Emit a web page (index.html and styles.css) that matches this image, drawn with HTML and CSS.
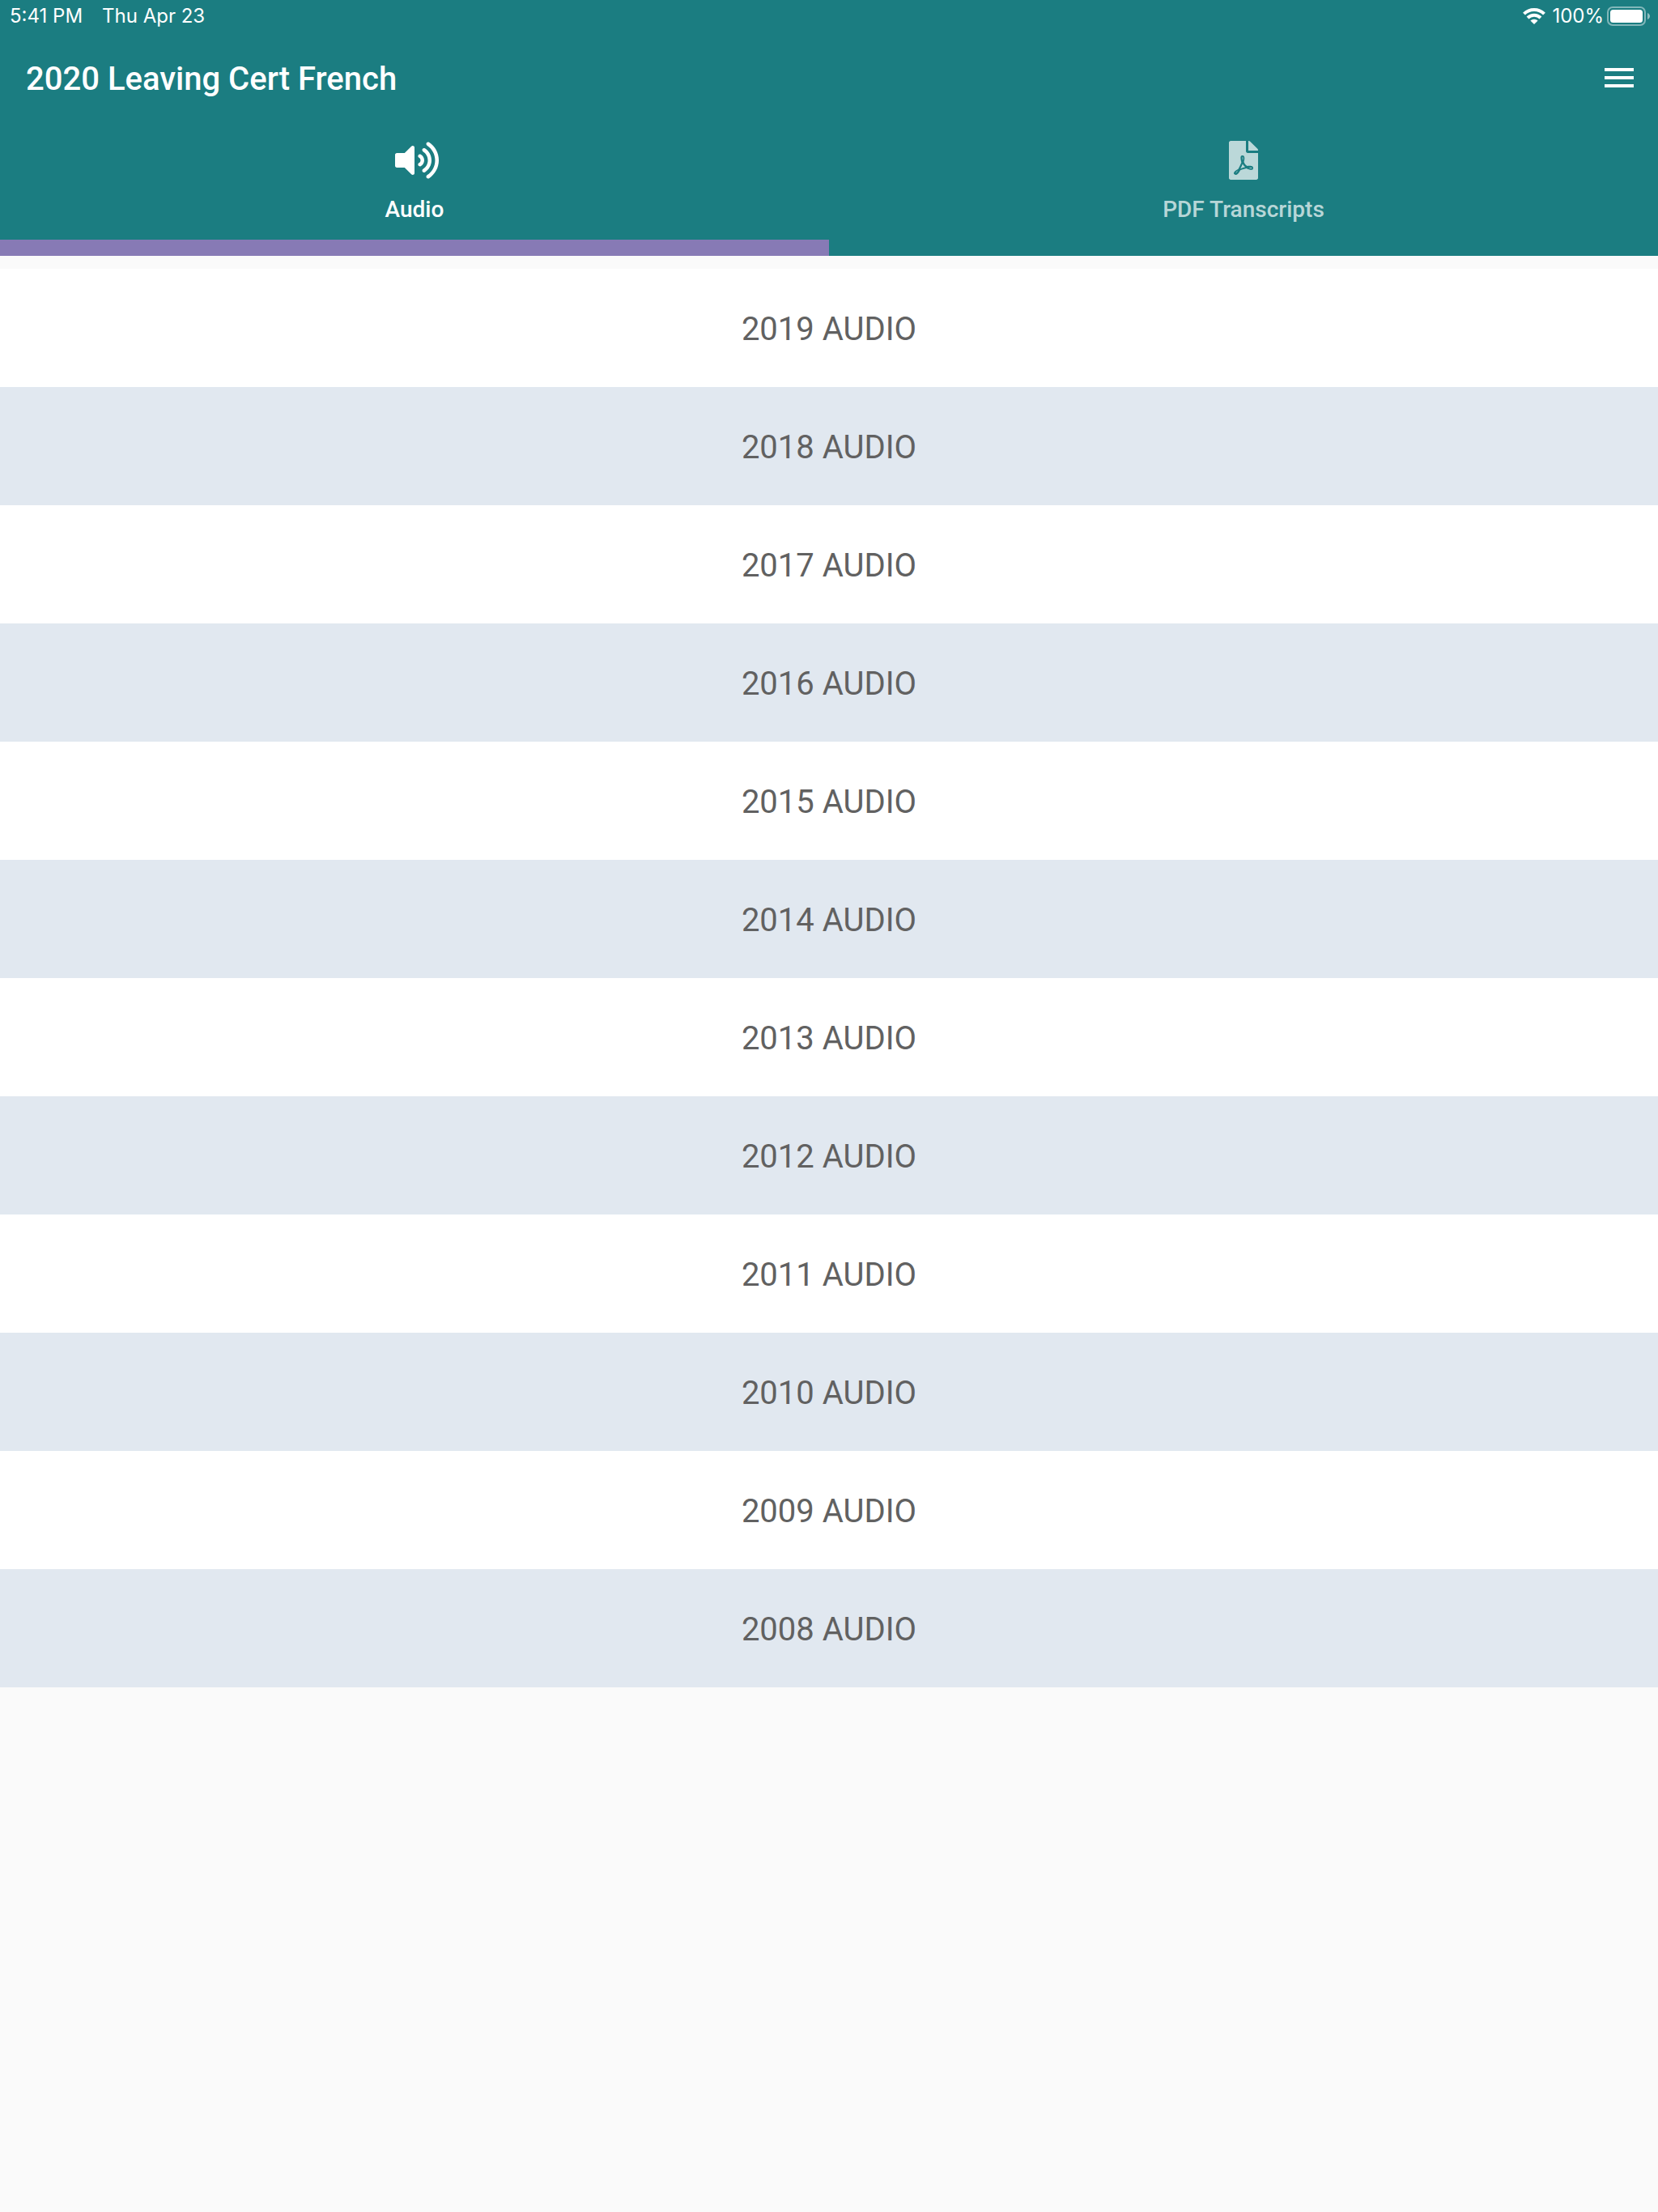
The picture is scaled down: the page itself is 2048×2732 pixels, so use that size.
FILE: index.html
```html
<!DOCTYPE html>
<html lang="en">
<head>
  <meta charset="UTF-8" />
  <meta name="viewport" content="width=device-width, initial-scale=1" />
  <title>2020 Leaving Cert French</title>
  <link rel="stylesheet" href="styles.css">
</head>
<body>
  <header class="header">
    <div class="status-bar">
      <div class="status-left">
        <span>5:41 PM</span>
        <span>Thu Apr 23</span>
      </div>
      <div class="status-right">
        <svg class="wifi" viewBox="0 0 28 20" aria-hidden="true">
          <g fill="none" stroke="#fff" stroke-width="4">
            <path d="M1.5 7.2a17.7 17.7 0 0 1 25 0" />
            <path d="M6 12a11.5 11.5 0 0 1 16 0" />
          </g>
          <path d="M9.4 15.6a6.6 6.6 0 0 1 9.2 0L14 20z" fill="#fff" />
        </svg>
        <span class="percent">100%</span>
        <svg class="battery" viewBox="0 0 54 24" aria-hidden="true">
          <rect x="1" y="1" width="46" height="22" rx="6" fill="none" stroke="#fff" stroke-opacity=".45" stroke-width="2" />
          <rect x="4" y="4" width="40" height="16" rx="3.5" fill="#fff" />
          <path d="M50 8c4 1.5 4 6.5 0 8z" fill="#fff" fill-opacity=".5" />
        </svg>
      </div>
    </div>

    <div class="toolbar">
      <h1>2020 Leaving Cert French</h1>
      <button class="menu-btn" type="button" aria-label="Menu">
        <svg viewBox="0 0 24 24" fill="#fff"><path d="M3 18h18v-2H3v2zm0-5h18v-2H3v2zm0-7v2h18V6H3z" /></svg>
      </button>
    </div>

    <div class="tabs" role="tablist">
      <button class="tab active" type="button" role="tab" aria-selected="true">
        <span class="tab-icon">
          <svg class="icon-audio" viewBox="0 0 576 512" fill="currentColor"><path d="M215.03 71.05L126.06 160H24c-13.26 0-24 10.74-24 24v144c0 13.25 10.74 24 24 24h102.06l88.97 88.95c15.03 15.03 40.97 4.47 40.97-16.97V88.02c0-21.46-25.96-31.98-40.97-16.97zm233.32-51.08c-11.17-7.33-26.18-4.24-33.51 6.95-7.34 11.17-4.22 26.18 6.95 33.51 66.27 43.49 105.82 116.6 105.82 195.58 0 78.98-39.55 152.09-105.82 195.58-11.17 7.32-14.29 22.34-6.95 33.5 7.04 10.71 21.93 14.56 33.51 6.95C528.27 439.58 576 351.33 576 256S528.27 72.43 448.35 19.97zM480 256c0-63.53-32.06-121.94-85.77-156.24-11.19-7.14-26.03-3.82-33.12 7.46s-3.78 26.21 7.41 33.36C408.27 165.97 432 209.11 432 256s-23.73 90.02-63.48 115.42c-11.19 7.14-14.5 22.07-7.41 33.36 6.51 10.36 21.12 15.14 33.12 7.46C447.94 377.94 480 319.54 480 256zm-141.77-76.87c-11.58-6.33-26.19-2.16-32.61 9.45-6.39 11.61-2.16 26.2 9.45 32.61C327.98 228.28 336 241.63 336 256c0 14.38-8.02 27.72-20.92 34.81-11.61 6.41-15.84 21-9.45 32.61 6.43 11.66 21.05 15.8 32.61 9.45 28.23-15.55 45.77-45 45.77-76.88s-17.54-61.32-45.78-76.86z" /></svg>
        </span>
        <span>Audio</span>
      </button>
      <button class="tab" type="button" role="tab" aria-selected="false">
        <span class="tab-icon">
          <svg class="icon-pdf" viewBox="0 0 384 512" fill="currentColor"><path d="M181.9 256.1c-5-16-4.9-46.9-2-46.9 8.4 0 7.6 36.9 2 46.9zm-1.7 47.2c-7.7 20.2-17.3 43.3-28.4 62.7 18.3-7 39-17.2 62.9-21.9-12.7-9.6-24.9-23.4-34.5-40.8zM86.1 428.1c0 .8 13.2-5.4 34.9-40.2-6.7 6.3-29.1 24.5-34.9 40.2zM248 160h136v328c0 13.3-10.7 24-24 24H24c-13.3 0-24-10.7-24-24V24C0 10.7 10.7 0 24 0h200v136c0 13.2 10.8 24 24 24zm-8 171.8c-20-12.2-33.3-29-42.7-53.8 4.5-18.5 11.6-46.6 6.2-64.2-4.7-29.4-42.4-26.5-47.8-6.8-5 18.3-.4 44.1 8.1 77-11.6 27.6-28.7 64.6-40.8 85.8-.1 0-.1.1-.2.1-27.1 13.9-73.6 44.5-54.5 68 5.6 6.9 16 10 21.5 10 17.9 0 35.7-18 61.1-61.8 25.8-8.5 54.1-19.1 79-23.2 21.7 11.8 47.1 19.5 64 19.5 29.2 0 31.2-32 19.7-43.4-13.9-13.6-54.3-9.7-73.6-7.2zM377 105L279 7c-4.5-4.5-10.6-7-17-7h-6v128h128v-6.1c0-6.3-2.5-12.4-7-16.9zm-74.1 255.3c4.1-2.7-2.5-11.9-42.8-9 37.1 15.8 42.8 9 42.8 9z" /></svg>
        </span>
        <span>PDF Transcripts</span>
      </button>
    </div>
  </header>

  <main>
    <ul class="audio-list">
      <li><button type="button">2019 AUDIO</button></li>
      <li><button type="button">2018 AUDIO</button></li>
      <li><button type="button">2017 AUDIO</button></li>
      <li><button type="button">2016 AUDIO</button></li>
      <li><button type="button">2015 AUDIO</button></li>
      <li><button type="button">2014 AUDIO</button></li>
      <li><button type="button">2013 AUDIO</button></li>
      <li><button type="button">2012 AUDIO</button></li>
      <li><button type="button">2011 AUDIO</button></li>
      <li><button type="button">2010 AUDIO</button></li>
      <li><button type="button">2009 AUDIO</button></li>
      <li><button type="button">2008 AUDIO</button></li>
    </ul>
  </main>
</body>
</html>
```
FILE: styles.css
```css
* {
  box-sizing: border-box;
}
body {
  margin: 0;
  font-family: Roboto, sans-serif;
  background: #fafafa;
  color: #616161;
}
button {
  border: 0;
  background: none;
  font: inherit;
  color: inherit;
  cursor: pointer;
}
svg {
  display: block;
}
.header {
  background: #1b7d81;
  color: white;
}

/* Status bar */
.status-bar {
  display: flex;
  justify-content: space-between;
  align-items: center;
  height: 40px;
  padding: 0 9px 0 12px;
  font-family: Inter, sans-serif;
  font-size: 24px;
  line-height: 40px;
}
.status-left {
  display: flex;
  gap: 24px;
}
.status-right {
  display: flex;
  align-items: center;
}
.wifi {
  width: 28px;
  height: 20px;
  margin-right: 8px;
}
.percent {
  margin-right: 4px;
}
.battery {
  width: 54px;
  height: 24px;
}

/* Title and menu */
.toolbar {
  display: flex;
  justify-content: space-between;
  align-items: center;
  height: 112px;
  padding: 0 24px 0 32px;
}
.toolbar h1 {
  margin: 0;
  padding-top: 4px;
  font-size: 40px;
  font-weight: 500;
  line-height: 48px;
}
.menu-btn {
  padding: 0;
}
.menu-btn svg {
  width: 48px;
  height: 48px;
}

/* Tabs */
.tabs {
  display: grid;
  grid-template-columns: 1fr 1fr;
}
.tab {
  display: flex;
  flex-direction: column;
  align-items: center;
  gap: 20px;
  padding: 22px 0 20px;
  border-bottom: 20px solid transparent;
  font-size: 28px;
  font-weight: 500;
  line-height: 34px;
  color: rgba(255, 255, 255, 0.7);
}
.tab.active {
  color: white;
  border-bottom-color: #877ab5;
}
.tab-icon {
  display: flex;
  width: 48px;
  height: 48px;
}
.icon-audio {
  flex: none;
  width: 54px;
  height: 48px;
}
.icon-pdf {
  width: 36px;
  height: 48px;
  margin: 0 auto;
}

/* Audio list */
.audio-list {
  list-style: none;
  margin: 0;
  padding: 16px 0 0;
}
.audio-list li {
  background: white;
}
.audio-list li:nth-child(even) {
  background: #e1e8f0;
}
.audio-list button {
  display: block;
  width: 100%;
  padding: 51px 0 47px;
  font-size: 40px;
  line-height: 48px;
  text-align: center;
}
```
